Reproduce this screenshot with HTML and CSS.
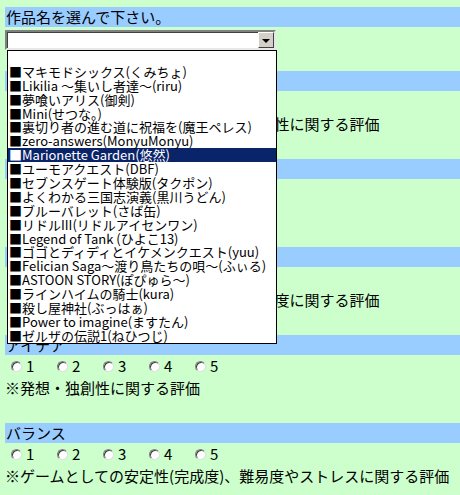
FILE: index.html
```html
<!DOCTYPE html>
<html lang="ja">
<head>
  <meta charset="UTF-8" />
  <title>作品評価</title>
  <link rel="stylesheet" href="styles.css">
</head>
<body>
  <div class="form">
    <div class="bar">作品名を選んで下さい。</div>
    <div class="pick">
      <div class="combo"><span class="combo-btn"></span></div>
      <ul class="drop">
        <li class="blank"></li>
        <li>■マキモドシックス(くみちょ)</li>
        <li>■Likilia ～集いし者達～(riru)</li>
        <li>■夢喰いアリス(御剣)</li>
        <li>■Mini(せつな。)</li>
        <li>■裏切り者の進む道に祝福を(魔王ペレス)</li>
        <li>■zero-answers(MonyuMonyu)</li>
        <li class="on">■Marionette Garden(悠然)</li>
        <li>■ユーモアクエスト(DBF)</li>
        <li>■セブンスゲート体験版(タクポン)</li>
        <li>■よくわかる三国志演義(黒川うどん)</li>
        <li>■ブルーバレット(さば缶)</li>
        <li>■リドルIII(リドルアイセンワン)</li>
        <li>■Legend of Tank (ひよこ13)</li>
        <li>■ゴゴとディディとイケメンクエスト(yuu)</li>
        <li>■Felician Saga～渡り鳥たちの唄～(ふぃる)</li>
        <li>■ASTOON STORY(ぽぴゅら～)</li>
        <li>■ラインハイムの騎士(kura)</li>
        <li>■殺し屋神社(ぶっはぁ)</li>
        <li>■Power to imagine(ますたん)</li>
        <li>■ゼルザの伝説1(ねひつじ)</li>
      </ul>
    </div>

    <div class="sec">
      <div class="bar">ストーリー</div>
      <div class="rates">
        <label><span class="radio"></span>1</label>
        <label><span class="radio"></span>2</label>
        <label><span class="radio"></span>3</label>
        <label><span class="radio"></span>4</label>
        <label><span class="radio"></span>5</label>
      </div>
      <div class="note">※シナリオ・世界観・キャラクターの個性に関する評価</div>
    </div>

    <div class="sec">
      <div class="bar">グラフィック・サウンド</div>
      <div class="rates">
        <label><span class="radio"></span>1</label>
        <label><span class="radio"></span>2</label>
        <label><span class="radio"></span>3</label>
        <label><span class="radio"></span>4</label>
        <label><span class="radio"></span>5</label>
      </div>
      <div class="note">※画像・音楽に関する評価</div>
    </div>

    <div class="sec">
      <div class="bar">システム</div>
      <div class="rates">
        <label><span class="radio"></span>1</label>
        <label><span class="radio"></span>2</label>
        <label><span class="radio"></span>3</label>
        <label><span class="radio"></span>4</label>
        <label><span class="radio"></span>5</label>
      </div>
      <div class="note">※システムの操作性・遊びやすさ・快適度に関する評価</div>
    </div>

    <div class="sec">
      <div class="bar">アイデア</div>
      <div class="rates">
        <label><span class="radio"></span>1</label>
        <label><span class="radio"></span>2</label>
        <label><span class="radio"></span>3</label>
        <label><span class="radio"></span>4</label>
        <label><span class="radio"></span>5</label>
      </div>
      <div class="note">※発想・独創性に関する評価</div>
    </div>

    <div class="sec">
      <div class="bar">バランス</div>
      <div class="rates">
        <label><span class="radio"></span>1</label>
        <label><span class="radio"></span>2</label>
        <label><span class="radio"></span>3</label>
        <label><span class="radio"></span>4</label>
        <label><span class="radio"></span>5</label>
      </div>
      <div class="note">※ゲームとしての安定性(完成度)、難易度やストレスに関する評価</div>
    </div>
  </div>
</body>
</html>
```

FILE: styles.css
```css
body {
  font-family: "Noto Sans CJK JP", sans-serif;
  font-size: 15px;
  background: #ccffcc;
  color: #000;
  margin: 7px 0 0 5px;
  padding: 0;
  overflow: hidden;
}
.bar {
  background: #99ccff;
  height: 20px;
  line-height: 20px;
  padding-left: 1px;
  white-space: nowrap;
}
.pick {
  position: relative;
  height: 20px;
  padding-top: 3px;
  margin-bottom: 21px;
}
.combo {
  box-sizing: border-box;
  width: 271px;
  height: 20px;
  background: #fff;
  border: 2px solid;
  border-color: #808080 #e8e8e8 #e8e8e8 #808080;
  box-shadow: inset 1px 1px 0 #404040;
  position: relative;
}
.combo-btn {
  position: absolute;
  right: 0;
  top: 0;
  box-sizing: border-box;
  width: 16px;
  height: 16px;
  background: #d4d0c8;
  border: 1px solid;
  border-color: #fff #404040 #404040 #fff;
  display: flex;
  align-items: center;
  justify-content: center;
}
.combo-btn::after {
  content: "";
  border-left: 4px solid transparent;
  border-right: 4px solid transparent;
  border-top: 4px solid #000;
  margin-top: 1px;
}
.drop {
  position: absolute;
  left: 2px;
  top: 23px;
  z-index: 5;
  box-sizing: border-box;
  width: 270px;
  margin: 0;
  padding: 0;
  list-style: none;
  background: #fff;
  border: 1px solid #000;
  font-size: 13px;
}
.drop li {
  height: 13.9px;
  line-height: 13.9px;
  padding-left: 1px;
  white-space: nowrap;
}
.drop li.on {
  background: #0a246a;
  color: #fff;
}
.sec {
  margin-bottom: 24px;
}
.rates {
  display: flex;
  align-items: center;
  height: 22px;
  padding-left: 6px;
}
.rates label {
  display: flex;
  align-items: center;
  width: 46px;
  line-height: 22px;
}
.radio {
  box-sizing: border-box;
  width: 11px;
  height: 11px;
  margin-right: 4px;
  border-radius: 50%;
  background: #fff;
  border: 1px solid;
  border-color: #808080 #e0e0e0 #e0e0e0 #808080;
  box-shadow: inset 1px 1px 0 #404040;
}
.note {
  line-height: 22px;
  white-space: nowrap;
}
```
